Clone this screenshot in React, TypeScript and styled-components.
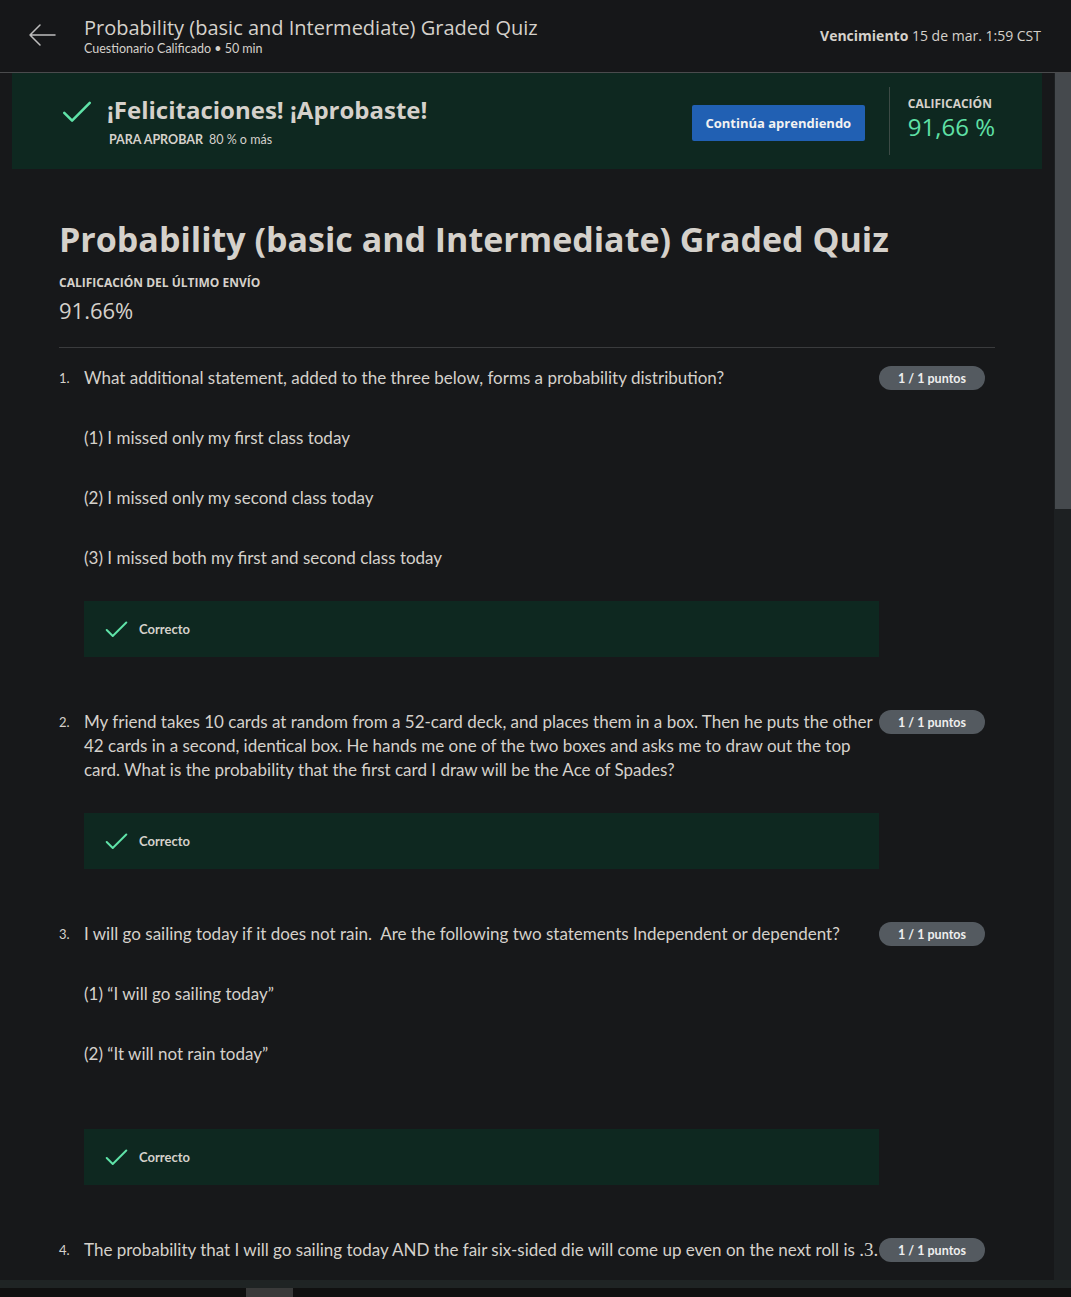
import React from 'react'
import styled, { createGlobalStyle } from 'styled-components'

const GlobalStyle = createGlobalStyle`
    html, body {
        margin: 0;
        padding: 0;
        background: #17181a;
    }
    * { box-sizing: border-box; }
`

const Page = styled.div`
    width: 1071px;
    height: 1297px;
    display: flex;
    flex-direction: column;
    background: #17181a;
    color: #d5d1cb;
    font-family: "Open Sans", "Liberation Sans", sans-serif;
    overflow: hidden;
`

const Header = styled.header`
    height: 73px;
    flex-shrink: 0;
    display: flex;
    align-items: center;
    padding: 0 30px 0 28px;
    background: #161719;
    border-bottom: 1px solid #4a4b4d;
`

const BackButton = styled.div`
    width: 28px;
    height: 28px;
    display: flex;
    align-items: center;
    justify-content: center;
    margin-right: 28px;
    margin-top: -2px;
`

const HeaderTitles = styled.div`
    display: flex;
    flex-direction: column;
    flex: 1;
    margin-top: -2px;
`

const HeaderTitle = styled.h1`
    margin: 0;
    font-size: 20px;
    font-weight: 400;
    line-height: 27px;
    color: #d5d1cb;
`

const HeaderSub = styled.div`
    font-family: Lato, "Liberation Sans", sans-serif;
    font-size: 12.5px;
    line-height: 16px;
    color: #d5d1cb;
`

const Due = styled.div`
    font-size: 14px;
    color: #d5d1cb;
    margin-top: -2px;
    b { font-weight: 700; }
`

const Body = styled.div`
    flex: 1;
    display: flex;
    min-height: 0;
`

const Scroller = styled.main`
    flex: 1;
    overflow: hidden;
`

const ScrollTrack = styled.div`
    width: 17px;
    background: #1d2022;
    display: flex;
    flex-direction: column;
`

const ScrollThumb = styled.div`
    height: 436px;
    margin-left: 1px;
    background: #45494d;
`

const Banner = styled.section`
    margin: 0 12px;
    height: 96px;
    background: #0e2820;
    display: flex;
    align-items: center;
    padding: 0 47px 0 50px;
`

const BannerMain = styled.div`
    flex: 1;
    display: flex;
    align-items: flex-start;
    gap: 15px;
    margin-top: 0;
`

const CheckHolder = styled.div`
    padding-top: 6px;
`

const BannerTitle = styled.h2`
    margin: 0;
    font-size: 24px;
    line-height: 30px;
    font-weight: 700;
    color: #d5d1cb;
`

const PassLine = styled.div`
    font-family: Lato, "Liberation Sans", sans-serif;
    font-size: 12.5px;
    margin-top: 7px;
    margin-left: 2px;
    b { font-weight: 700; margin-right: 6px; }
`

const PrimaryButton = styled.button`
    height: 36px;
    width: 173px;
    padding: 0;
    border: none;
    border-radius: 2px;
    background: #2160b3;
    color: #f2f2f2;
    font-family: "Open Sans", "Liberation Sans", sans-serif;
    font-weight: 700;
    font-size: 13px;
    margin-top: 4px;
`

const GradeBox = styled.div`
    margin-left: 24px;
    border-left: 1px solid #3c4a45;
    height: 68px;
    padding: 9px 0 0 18px;
    display: flex;
    flex-direction: column;
    gap: 1px;
`

const SmallCaps = styled.div<{ $gap?: number }>`
    font-size: 12px;
    font-weight: 700;
    text-transform: uppercase;
    line-height: 16px;
    margin-top: ${p => p.$gap ?? 0}px;
    color: #d5d1cb;
`

const GradeValue = styled.div`
    font-size: 24px;
    line-height: 28px;
    color: #5fe0a6;
`

const Content = styled.div`
    padding: 48px 59px 0 59px;
`

const QuizTitle = styled.h1`
    margin: 0;
    font-size: 34px;
    line-height: 44px;
    font-weight: 700;
    color: #d5d1cb;
`

const LastGrade = styled.div`
    font-size: 22px;
    line-height: 30px;
    margin-top: 4px;
    padding-bottom: 22px;
    border-bottom: 1px solid #3a3b3d;
`

const QuestionList = styled.ol`
    list-style: none;
    margin: 0;
    padding: 18px 0 0;
`

const Question = styled.li`
    display: flex;
    margin-bottom: 53px;
`

const Number = styled.div`
    width: 25px;
    flex-shrink: 0;
    font-family: Lato, "Liberation Sans", sans-serif;
    font-size: 13px;
    line-height: 24px;
`

const QuestionBody = styled.div`
    width: 795px;
    flex-shrink: 0;
`

const Text = styled.p<{ $gap?: number }>`
    margin: ${p => p.$gap ?? 0}px 0 0;
    font-family: Lato, "Liberation Sans", sans-serif;
    font-size: 17px;
    line-height: 24px;
    color: #d5d1cb;
`

const Math = styled.span`
    font-family: "Liberation Serif", serif;
    font-size: 19px;
`

const Feedback = styled.div<{ $gap?: number }>`
    margin-top: ${p => p.$gap ?? 31}px;
    height: 56px;
    background: #0e2820;
    display: flex;
    align-items: center;
    padding-left: 21px;
    gap: 11px;
    font-family: Lato, "Liberation Sans", sans-serif;
    font-weight: 700;
    font-size: 13px;
`

const Points = styled.div`
    height: 24px;
    width: 106px;
    border-radius: 12px;
    background: #545a60;
    color: #eeeeee;
    font-family: Lato, "Liberation Sans", sans-serif;
    font-weight: 700;
    font-size: 12.5px;
    display: flex;
    align-items: center;
    justify-content: center;
    flex-shrink: 0;
`

const BottomStrip = styled.div`
    height: 8px;
    flex-shrink: 0;
    background: #1f2424;
`

const Taskbar = styled.div`
    height: 9px;
    flex-shrink: 0;
    background: #101010;
    display: flex;
    padding-left: 246px;
`

const TaskItem = styled.div`
    width: 47px;
    background: #3a3a3a;
`

const Check = ({ size = 30 }: { size?: number }) => (
    <svg width={size} height={size * 0.72} viewBox="0 0 30 22" fill="none">
        <path d="M2 12 L10 20 L28 2" stroke="#5fe3a8" strokeWidth="2.6" strokeLinecap="round" strokeLinejoin="round" />
    </svg>
)

const ArrowLeft = () => (
    <svg width="28" height="24" viewBox="0 0 28 24" fill="none">
        <path d="M27 12 H2 M12 2 L2 12 L12 22" stroke="#bdbdbd" strokeWidth="1.5" strokeLinecap="round" strokeLinejoin="round" />
    </svg>
)

const PointsBadge = () => <Points>1 / 1 puntos</Points>

const Correct = ({ gap }: { gap?: number }) => (
    <Feedback $gap={gap}>
        <Check size={23} />
        Correcto
    </Feedback>
)

export default function App() {
    return (
        <Page>
            <GlobalStyle />
            <Header>
                <BackButton><ArrowLeft /></BackButton>
                <HeaderTitles>
                    <HeaderTitle>Probability (basic and Intermediate) Graded Quiz</HeaderTitle>
                    <HeaderSub>Cuestionario Calificado • 50 min</HeaderSub>
                </HeaderTitles>
                <Due><b>Vencimiento</b> 15 de mar. 1:59 CST</Due>
            </Header>
            <Body>
                <Scroller>
                    <Banner>
                        <BannerMain>
                            <CheckHolder><Check size={30} /></CheckHolder>
                            <div>
                                <BannerTitle>¡Felicitaciones! ¡Aprobaste!</BannerTitle>
                                <PassLine><b>PARA APROBAR</b>80 % o más</PassLine>
                            </div>
                        </BannerMain>
                        <PrimaryButton>Continúa aprendiendo</PrimaryButton>
                        <GradeBox>
                            <SmallCaps>Calificación</SmallCaps>
                            <GradeValue>91,66 %</GradeValue>
                        </GradeBox>
                    </Banner>
                    <Content>
                        <QuizTitle>Probability (basic and Intermediate) Graded Quiz</QuizTitle>
                        <SmallCaps $gap={14}>Calificación del último envío</SmallCaps>
                        <LastGrade>91.66%</LastGrade>
                        <QuestionList>
                            <Question>
                                <Number>1.</Number>
                                <QuestionBody>
                                    <Text>What additional statement, added to the three below, forms a probability distribution?</Text>
                                    <Text $gap={36}>(1) I missed only my first class today</Text>
                                    <Text $gap={36}>(2) I missed only my second class today</Text>
                                    <Text $gap={36}>(3) I missed both my first and second class today</Text>
                                    <Correct />
                                </QuestionBody>
                                <PointsBadge />
                            </Question>
                            <Question>
                                <Number>2.</Number>
                                <QuestionBody>
                                    <Text>My friend takes 10 cards at random from a 52-card deck, and places them in a box. Then he puts the other 42 cards in a second, identical box. He hands me one of the two boxes and asks me to draw out the top card. What is the probability that the first card I draw will be the Ace of Spades?</Text>
                                    <Correct />
                                </QuestionBody>
                                <PointsBadge />
                            </Question>
                            <Question>
                                <Number>3.</Number>
                                <QuestionBody>
                                    <Text>I will go sailing today if it does not rain.&nbsp; Are the following two statements Independent or dependent?</Text>
                                    <Text $gap={36}>(1) “I will go sailing today”</Text>
                                    <Text $gap={36}>(2) “It will not rain today”</Text>
                                    <Correct gap={63} />
                                </QuestionBody>
                                <PointsBadge />
                            </Question>
                            <Question>
                                <Number>4.</Number>
                                <QuestionBody>
                                    <Text>The probability that I will go sailing today AND the fair six-sided die will come up even on the next roll is <Math>.3.</Math></Text>
                                </QuestionBody>
                                <PointsBadge />
                            </Question>
                        </QuestionList>
                    </Content>
                </Scroller>
                <ScrollTrack>
                    <ScrollThumb />
                </ScrollTrack>
            </Body>
            <BottomStrip />
            <Taskbar>
                <TaskItem />
            </Taskbar>
        </Page>
    )
}
